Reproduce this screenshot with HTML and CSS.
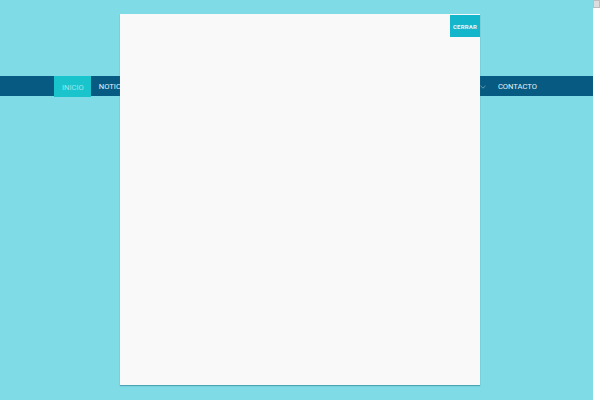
FILE: index.html
```html
<!DOCTYPE html>
<html lang="es">
<head>
<meta charset="utf-8">
<title>Inicio</title>
<link rel="stylesheet" href="styles.css">
</head>
<body>
<div class="page">
  <div class="site">
    <div class="header"></div>
    <nav class="nav">
      <ul class="menu">
        <li class="item active">INICIO</li>
        <li class="item">NOTICIAS</li>
        <li class="item">NOSOTROS</li>
      </ul>
      <ul class="menu">
        <li class="item drop"><span class="hidden-label">SERVICIOS</span>
          <svg class="chev" width="6" height="4" viewBox="0 0 6 4"><path d="M0.5 0.8 L3 3.2 L5.5 0.8" fill="none" stroke="#7fa9bd" stroke-width="0.8"/></svg>
        </li>
        <li class="item">CONTACTO</li>
      </ul>
    </nav>
  </div>
  <div class="scrollbar"><div class="scroll-btn"></div></div>
</div>
<div class="modal">
  <button class="close">CERRAR</button>
</div>
</body>
</html>
```
FILE: styles.css
```css
html, body {
  margin: 0;
  padding: 0;
  height: 100%;
}
body {
  background: #7fdbe6;
  font-family: Roboto, "Liberation Sans", sans-serif;
  overflow: hidden;
}
.page {
  display: flex;
  height: 400px;
}
.site {
  flex: 1;
}
.header {
  height: 76px;
}
.nav {
  height: 20px;
  background: #075b83;
  display: flex;
  justify-content: space-between;
  padding: 0 48px 0 54px;
}
.menu {
  list-style: none;
  margin: 0;
  padding: 0;
  display: flex;
}
.item {
  height: 20px;
  box-sizing: border-box;
  padding: 1px 8px 0;
  font-size: 7.6px;
  font-weight: 400;
  letter-spacing: 0;
  color: #e2f3f8;
  display: flex;
  align-items: center;
  gap: 6px;
}
.item.active {
  background: #1ac4cc;
  color: #9be6ec;
  height: 21px;
  padding-left: 8px;
  padding-right: 7px;
}
.drop {
  padding-right: 4px;
}
.hidden-label {
  visibility: hidden;
}
.scrollbar {
  width: 7px;
  background: #ffffff;
}
.scroll-btn {
  height: 8px;
  background: #dcdcdc;
  border: 1px solid #bdbdbd;
  box-sizing: border-box;
}
.modal {
  position: absolute;
  left: 120px;
  top: 14px;
  width: 360px;
  height: 371px;
  background: #f9f9f9;
  box-shadow: 0 1px 1px rgba(40, 130, 150, 0.6);
}
.close {
  position: absolute;
  right: 0;
  top: 1px;
  width: 30px;
  height: 22px;
  border: 0;
  padding: 0;
  background: #14b6cc;
  color: #e6f8fb;
  font-family: Roboto, "Liberation Sans", sans-serif;
  font-size: 6px;
  font-weight: 700;
  letter-spacing: 0.2px;
}
```
